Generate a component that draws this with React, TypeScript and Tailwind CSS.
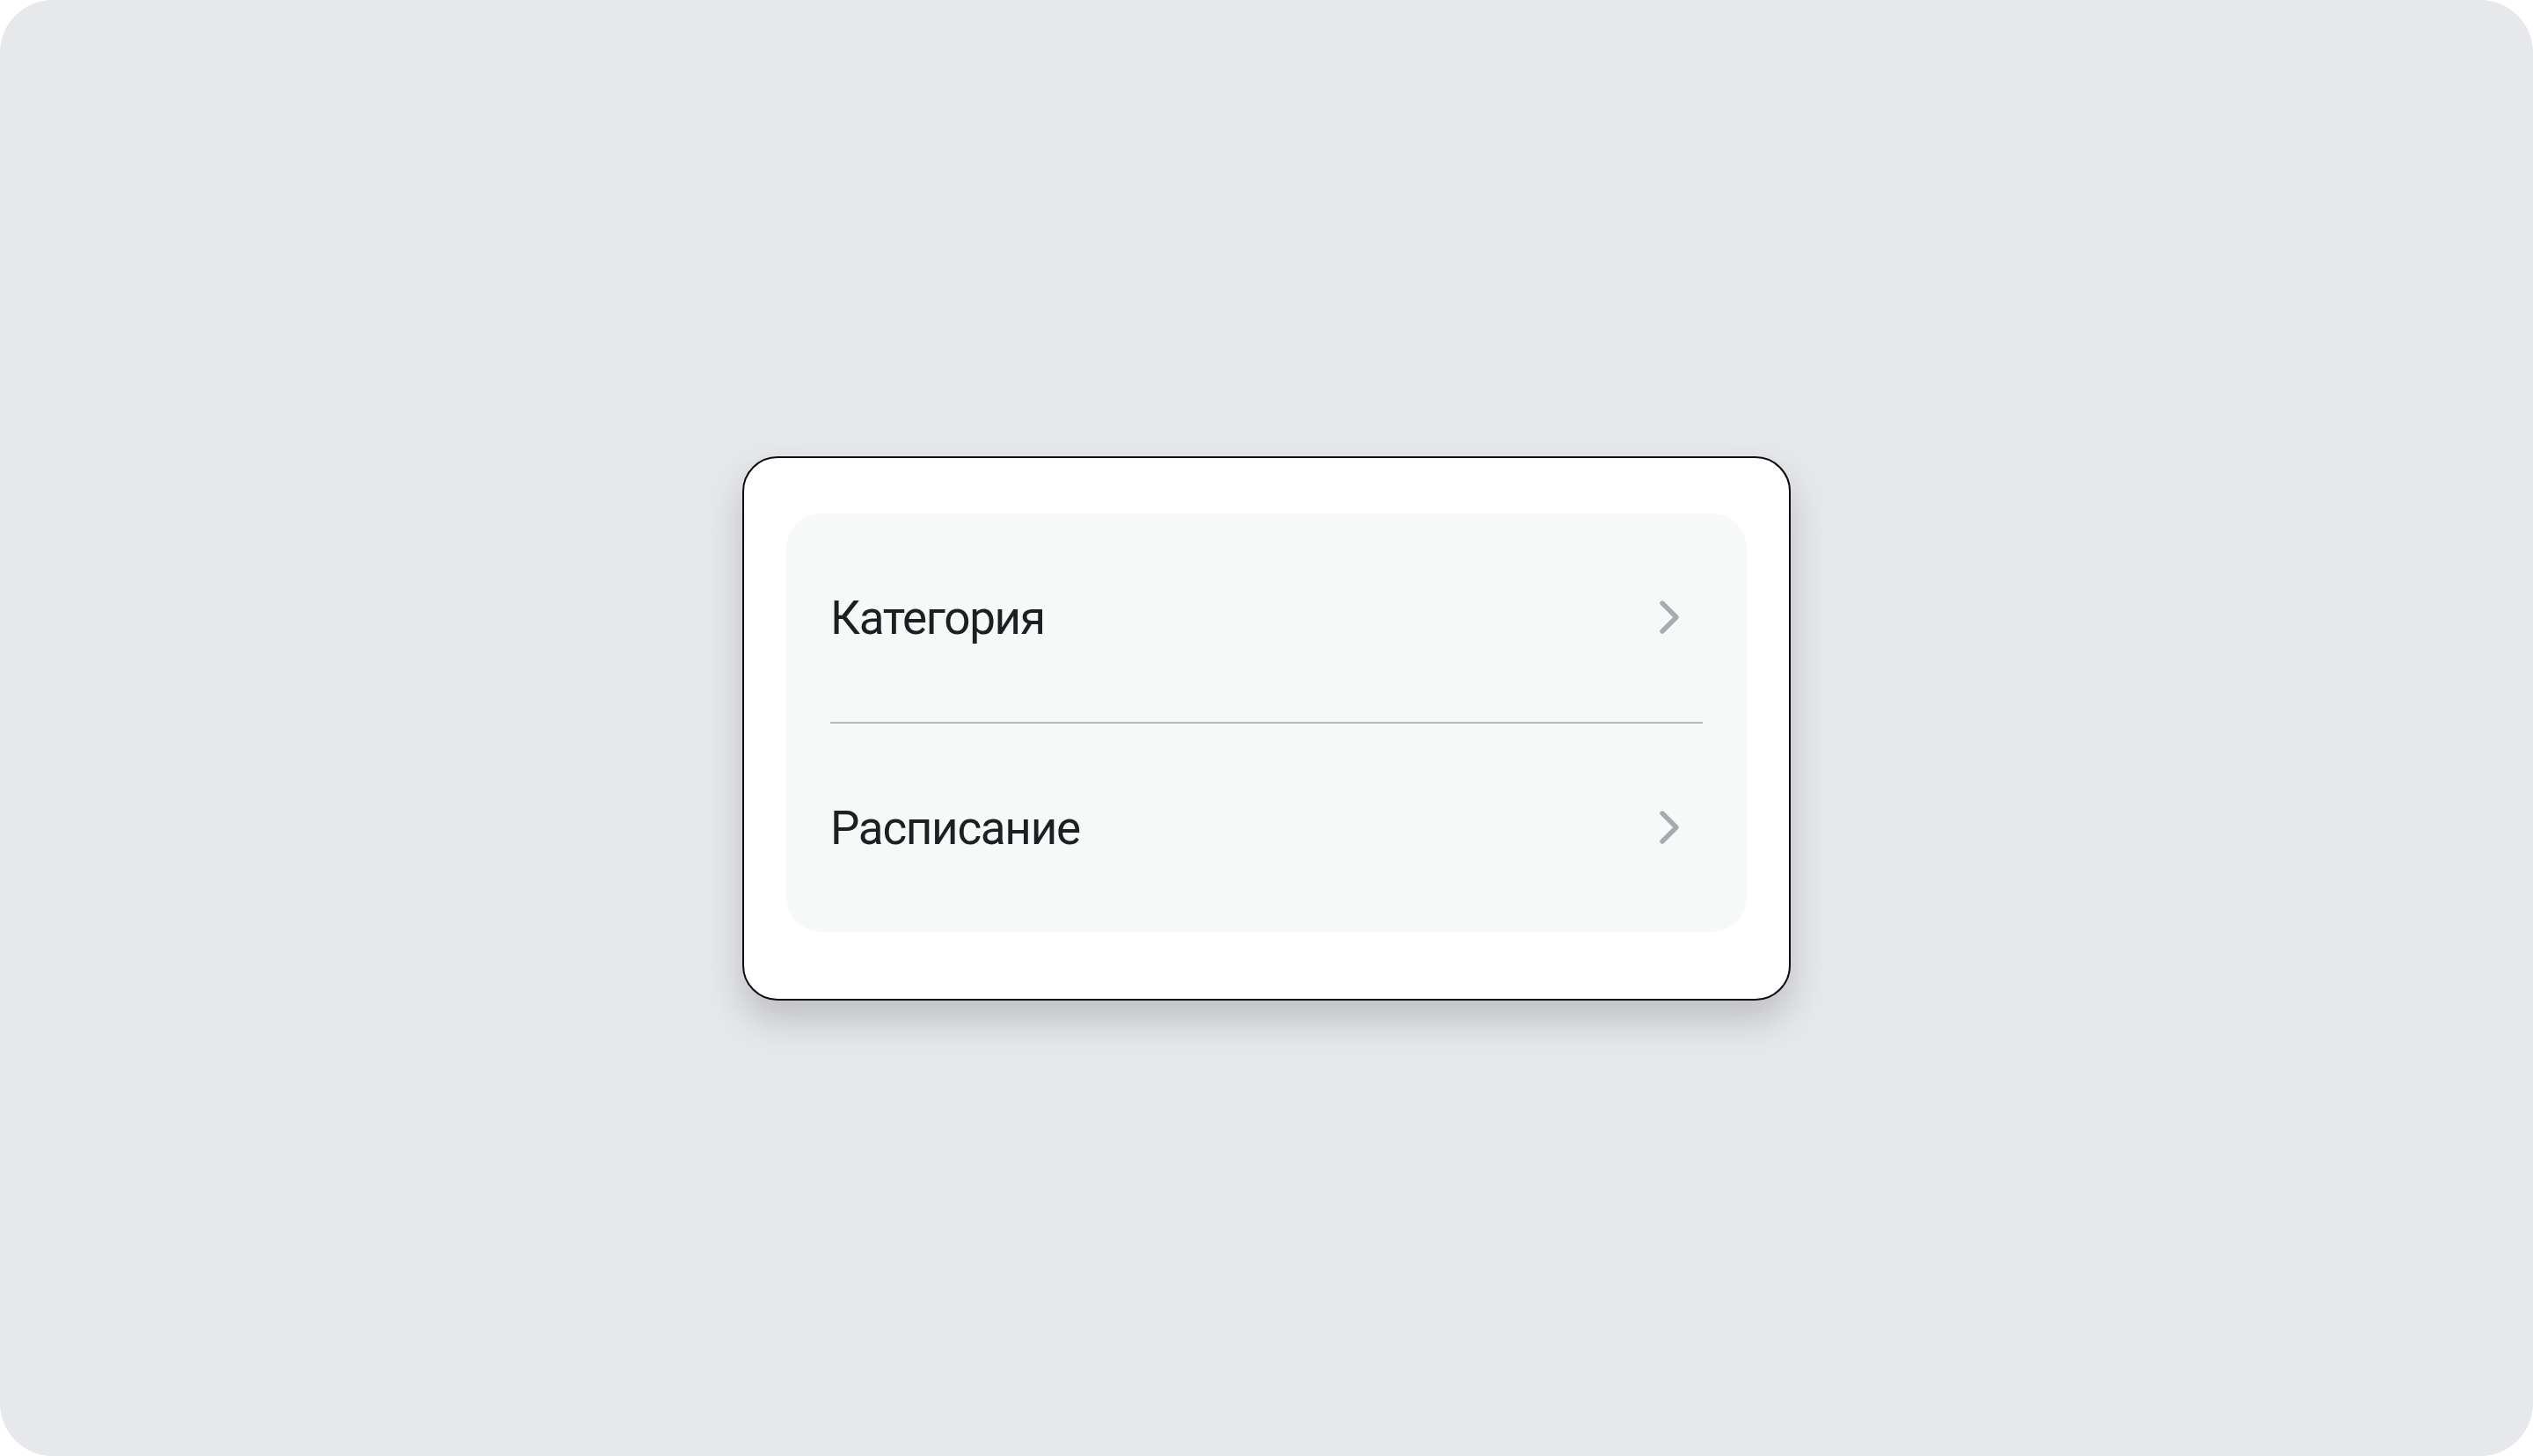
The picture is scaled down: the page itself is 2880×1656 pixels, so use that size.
import { ChevronRight } from "lucide-react";

const items = ["Категория", "Расписание"];

function Row({ label }: { label: string }) {
  return (
    <div className="h-[237px] flex items-center justify-between">
      <span className="text-[53px] leading-none text-[#1e1f23] tracking-[-1.3px] pt-[3px]">{label}</span>
      <ChevronRight className="w-[64px] h-[64px] mr-[6px] text-[#a9aaaf]" strokeWidth={2} />
    </div>
  );
}

export default function App() {
  return (
    <div className="w-[2880px] h-[1656px] bg-white" style={{ fontFamily: "Roboto, 'Noto Sans', sans-serif" }}>
      <div className="w-full h-full rounded-[60px] bg-[#e7e8ec] flex items-center justify-center">
        <div className="w-[1192px] h-[619px] bg-white border-2 border-[#0d0d0d] rounded-[40px] pt-[63px] px-[48px] pb-[76px] shadow-[0_22px_44px_rgba(0,0,0,0.18)]">
          <div className="h-full rounded-[40px] bg-[#f7f8f8] px-[50px]">
            <Row label={items[0]} />
            <div className="h-[2px] bg-[#b9b9bc]" />
            <Row label={items[1]} />
          </div>
        </div>
      </div>
    </div>
  );
}
